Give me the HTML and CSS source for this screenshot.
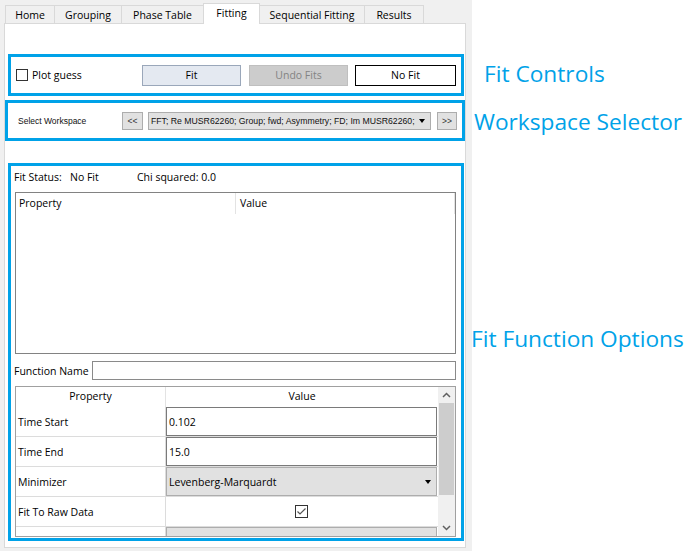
FILE: index.html
```html
<!DOCTYPE html>
<html>
<head>
<meta charset="utf-8">
<link rel="stylesheet" href="styles.css">
</head>
<body>
<div class="page">
  <div class="app">
    <div class="tabbar">
      <div class="tab t-home">Home</div>
      <div class="tab t-group">Grouping</div>
      <div class="tab t-phase">Phase Table</div>
      <div class="tab t-fit active">Fitting</div>
      <div class="tab t-seq">Sequential Fitting</div>
      <div class="tab t-res">Results</div>
    </div>
    <div class="pane">
      <section class="box box-controls">
        <label class="plot"><span class="cb"></span><span>Plot guess</span></label>
        <div class="btn btn-fit">Fit</div>
        <div class="btn btn-undo">Undo Fits</div>
        <div class="btn btn-nofit">No Fit</div>
      </section>
      <section class="box box-ws">
        <span class="ws-label">Select Workspace</span>
        <div class="navbtn nav-prev">&lt;&lt;</div>
        <div class="ws-combo">
          <span class="ws-text">FFT; Re MUSR62260; Group; fwd; Asymmetry; FD; Im MUSR62260;</span>
          <span class="tri"></span>
        </div>
        <div class="navbtn nav-next">&gt;&gt;</div>
      </section>
      <section class="box box-options">
        <div class="status">
          <span class="st-label">Fit Status:</span>
          <span class="st-value">No Fit</span>
          <span>Chi squared: 0.0</span>
        </div>
        <div class="results">
          <div class="res-head">
            <div class="rh-prop">Property</div>
            <div class="rh-val">Value</div>
          </div>
        </div>
        <div class="fname">
          <span class="fname-label">Function Name</span>
          <div class="fname-input"></div>
        </div>
        <div class="browser">
          <div class="br-main">
            <div class="br-head">
              <div class="bc-prop">Property</div>
              <div class="bc-val">Value</div>
            </div>
            <div class="br-row">
              <div class="bc-prop">Time Start</div>
              <div class="bc-val"><div class="edit">0.102</div></div>
            </div>
            <div class="br-row">
              <div class="bc-prop">Time End</div>
              <div class="bc-val"><div class="edit">15.0</div></div>
            </div>
            <div class="br-row">
              <div class="bc-prop">Minimizer</div>
              <div class="bc-val"><div class="combo">Levenberg-Marquardt<span class="tri"></span></div></div>
            </div>
            <div class="br-row">
              <div class="bc-prop">Fit To Raw Data</div>
              <div class="bc-val center">
                <svg class="chk" width="13" height="13" viewBox="0 0 13 13"><rect x="0.5" y="0.5" width="12" height="12" fill="#fff" stroke="#333"/><polyline points="2.5,6.5 5,9 10.5,3.5" fill="none" stroke="#555" stroke-width="1.2"/></svg>
              </div>
            </div>
            <div class="br-row partial">
              <div class="bc-prop"></div>
              <div class="bc-val"><div class="combo grey"></div></div>
            </div>
          </div>
          <div class="vscroll">
            <div class="sb-btn"><svg width="9" height="6" viewBox="0 0 9 6"><polyline points="1,5 4.5,1.5 8,5" fill="none" stroke="#606060" stroke-width="1.5"/></svg></div>
            <div class="sb-thumb"></div>
            <div class="sb-fill"></div>
            <div class="sb-btn"><svg width="9" height="6" viewBox="0 0 9 6"><polyline points="1,1 4.5,4.5 8,1" fill="none" stroke="#606060" stroke-width="1.5"/></svg></div>
          </div>
        </div>
      </section>
    </div>
  </div>
  <div class="notes">
    <div class="note n1">Fit Controls</div>
    <div class="note n2">Workspace Selector</div>
    <div class="note n3">Fit Function Options</div>
  </div>
</div>
</body>
</html>
```
FILE: styles.css
```css
* { box-sizing: border-box; }
body {
  margin: 0;
  background: #fff;
  font-family: "Open Sans", "Noto Sans", sans-serif;
  font-size: 10.5px;
  color: #000;
}
.page { display: flex; width: 686px; height: 551px; overflow: hidden; }
.app { flex: none; width: 472px; height: 551px; background: #f0f0f0; }

/* tabs */
.tabbar { display: flex; align-items: flex-end; height: 23px; padding-left: 5px; }
.tab {
  height: 18px;
  margin-left: -1px;
  border: 1px solid #d9d9d9;
  border-bottom: none;
  background: #f0f0f0;
  display: flex; align-items: center; justify-content: center;
  padding-top: 1px;
}
.tab:first-child { margin-left: 0; }
.t-home { width: 50px; }
.t-group { width: 68px; }
.t-phase { width: 83px; }
.t-fit { width: 57px; }
.t-seq { width: 106px; }
.t-res { width: 60px; }
.tab.active {
  height: 21px;
  margin-bottom: -1px;
  background: #fff;
  position: relative;
  z-index: 1;
  padding-top: 0;
  padding-bottom: 2px;
}

.pane {
  margin-left: 4px;
  width: 462px;
  height: 525px;
  border: 1px solid #d9d9d9;
  background: #fff;
}
.box { border: 3px solid #00a2e8; }

/* fit controls */
.box-controls {
  margin: 30px 1px 0 3px;
  height: 42px;
  display: flex; align-items: center;
  padding: 0 5px;
}
.plot { display: flex; align-items: center; gap: 4px; }
.cb { width: 12px; height: 12px; border: 1px solid #333; background: #fff; }
.btn {
  height: 21px;
  display: flex; align-items: center; justify-content: center;
}
.btn-fit { width: 99px; margin-left: auto; background: #e4e9f1; border: 1px solid #9aa7ba; }
.btn-undo { width: 99px; margin-left: 8px; background: #cccccc; border: 1px solid #bfbfbf; color: #838383; }
.btn-nofit { width: 101px; margin-left: 7px; background: #fff; border: 1px solid #000; }

/* workspace selector */
.box-ws {
  margin-top: 4px;
  height: 41px;
  display: flex; align-items: center;
  padding: 0 5px 0 10px;
  font-family: "Liberation Sans", Arial, sans-serif;
  font-size: 8.5px;
}
.ws-label { color: #111; }
.navbtn {
  height: 18px;
  background: #e1e1e1;
  border: 1px solid #adadad;
  display: flex; align-items: center; justify-content: center;
  color: #333;
}
.nav-prev { width: 21px; margin-left: auto; }
.nav-next { width: 20px; }
.ws-combo {
  width: 283px; height: 18px;
  margin: 0 6px 0 5px;
  background: #e1e1e1;
  border: 1px solid #adadad;
  display: flex; align-items: center;
  padding-left: 2px;
}
.ws-text { flex: none; white-space: nowrap; color: #111; font-size: 8.7px; }
.tri {
  flex: none;
  width: 0; height: 0;
  border-left: 3.5px solid transparent;
  border-right: 3.5px solid transparent;
  border-top: 4px solid #000;
  margin-left: auto; margin-right: 5px;
}

/* fit options */
.box-options {
  margin: 22px 1px 0 3px;
  height: 378px;
  padding: 0 5px 0 4px;
}
.status {
  margin: 1px 0 0 -1px;
  height: 20px;
  display: flex; align-items: center;
}
.st-label { width: 56px; }
.st-value { width: 67px; }
.results {
  margin-top: 5px;
  height: 162px;
  border: 1px solid #828282;
}
.res-head { display: flex; height: 21px; }
.rh-prop { width: 220px; padding: 3px 0 0 3px; border-right: 1px solid #e3e3e3; }
.rh-val { width: 219px; padding: 3px 0 0 4px; border-right: 1px solid #e3e3e3; }

.fname { margin: 7px 0 0 -1px; height: 19px; display: flex; align-items: center; }
.fname-input { margin-left: auto; width: 364px; height: 19px; border: 1px solid #8a8a8a; background: #fff; }

.browser {
  margin-top: 6px;
  height: 151px;
  border: 1px solid #a0a0a0;
  display: flex;
}
.br-main { width: 422px; overflow: hidden; }
.br-head { display: flex; height: 20px; }
.br-head .bc-prop { width: 150px; text-align: center; padding-top: 2px; border-right: 1px solid #e3e3e3; }
.br-head .bc-val { width: 272px; text-align: center; padding-top: 2px; }
.br-row { display: flex; height: 30px; border-bottom: 1px solid #dcdcdc; }
.br-row .bc-prop { width: 150px; padding-left: 2px; display: flex; align-items: center; border-right: 1px solid #dcdcdc; }
.br-row .bc-val { width: 272px; padding-right: 1px; }
.bc-val.center { display: flex; align-items: center; justify-content: center; }
.edit {
  height: 29px;
  border: 1px solid #7a7a7a;
  background: #fff;
  display: flex; align-items: center;
  padding-left: 2px;
}
.combo {
  height: 29px;
  border: 1px solid #adadad;
  background: #e1e1e1;
  display: flex; align-items: center;
  padding-left: 2px;
}
.br-row.partial { height: 10px; border-bottom: none; }
.chk { display: block; }

.vscroll { width: 17px; background: #f0f0f0; display: flex; flex-direction: column; }
.sb-btn { height: 16px; display: flex; align-items: center; justify-content: center; }
.sb-thumb { height: 92px; margin: 0 1px; background: #cdcdcd; }
.sb-fill { flex: 1; }

/* annotations */
.notes {
  flex: 1;
  display: flex; flex-direction: column;
  color: #00a2e8;
  font-family: "Open Sans", "Noto Sans", sans-serif;
  font-size: 22.7px;
  line-height: 30px;
}
.note { white-space: nowrap; }
.n1 { margin: 59px 0 0 12px; }
.n2 { margin: 18px 0 0 2px; }
.n3 { margin: 187px 0 0 -1px; }
```
